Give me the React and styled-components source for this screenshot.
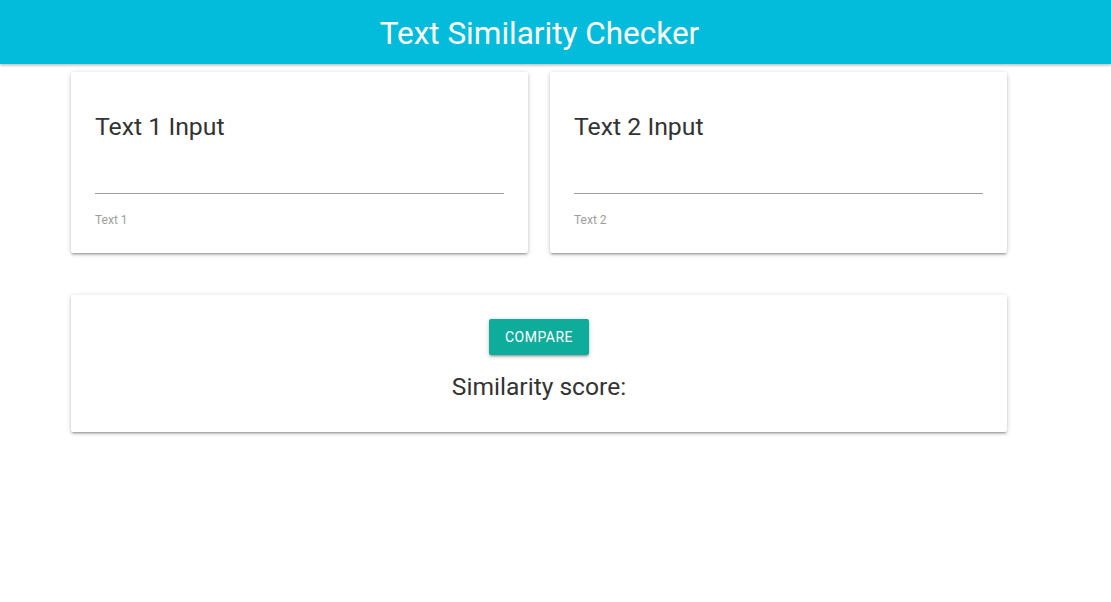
import React from "react";
import styled, { createGlobalStyle } from "styled-components";

const Global = createGlobalStyle`
  html, body { margin: 0; padding: 0; background: #fff; }
  body { font-family: Roboto, "Noto Sans", sans-serif; color: rgba(0,0,0,0.87); min-height: 602px; }
`;

const Header = styled.header`
  height: 64px;
  background: #03bbda;
  box-shadow: 0 2px 2px 0 rgba(0,0,0,0.14), 0 1px 3px 0 rgba(0,0,0,0.12);
  display: flex;
  align-items: center;
  justify-content: center;
  padding-right: 32px;
`;

const HeaderTitle = styled.h1`
  margin: 2px 0 0 0;
  font-size: 31.5px;
  font-weight: 400;
  color: #fff;
`;

const Container = styled.main`
  width: 936px;
  margin-left: 71px;
  padding-top: 8px;
  padding-bottom: 40px;
  display: flex;
  flex-direction: column;
  gap: 42px;
`;

const Row = styled.div`
  display: grid;
  grid-template-columns: 457px 457px;
  column-gap: 22px;
`;

const Card = styled.section`
  background: #fff;
  border-radius: 2px;
  box-shadow: 0 2px 2px 0 rgba(0,0,0,0.14), 0 3px 1px -2px rgba(0,0,0,0.12), 0 1px 5px 0 rgba(0,0,0,0.2);
`;

const InputCard = styled(Card)`
  height: 181px;
  padding: 39px 24px 0 24px;
  box-sizing: border-box;
`;

const CardTitle = styled.h2`
  margin: 0;
  font-size: 24.8px;
  font-weight: 400;
  line-height: 32px;
  color: #333;
`;

const Field = styled.div`
  margin-top: 50px;
  border-bottom: 1px solid #9e9e9e;
  height: 0;
`;

const Label = styled.div`
  margin-top: 19px;
  font-size: 12px;
  color: #9e9e9e;
`;

const CompareCard = styled(Card)`
  height: 137px;
  box-sizing: border-box;
  padding-top: 24px;
  display: flex;
  flex-direction: column;
  align-items: center;
`;

const Button = styled.button`
  width: 100px;
  height: 36px;
  border: none;
  border-radius: 2px;
  background: #0eac9a;
  color: #fff;
  font-family: Roboto, sans-serif;
  font-size: 14px;
  letter-spacing: 0.5px;
  text-transform: uppercase;
  box-shadow: 0 2px 2px 0 rgba(0,0,0,0.14), 0 3px 1px -2px rgba(0,0,0,0.12), 0 1px 5px 0 rgba(0,0,0,0.2);
  cursor: pointer;
`;

const Score = styled.div`
  margin-top: 16px;
  font-size: 24.6px;
  line-height: 32px;
  color: #333;
`;

export default function App() {
  return (
    <>
      <Global />
      <Header>
        <HeaderTitle>Text Similarity Checker</HeaderTitle>
      </Header>
      <Container>
        <Row>
          <InputCard>
            <CardTitle>Text 1 Input</CardTitle>
            <Field />
            <Label>Text 1</Label>
          </InputCard>
          <InputCard>
            <CardTitle>Text 2 Input</CardTitle>
            <Field />
            <Label>Text 2</Label>
          </InputCard>
        </Row>
        <CompareCard>
          <Button>Compare</Button>
          <Score>Similarity score:</Score>
        </CompareCard>
      </Container>
    </>
  );
}
